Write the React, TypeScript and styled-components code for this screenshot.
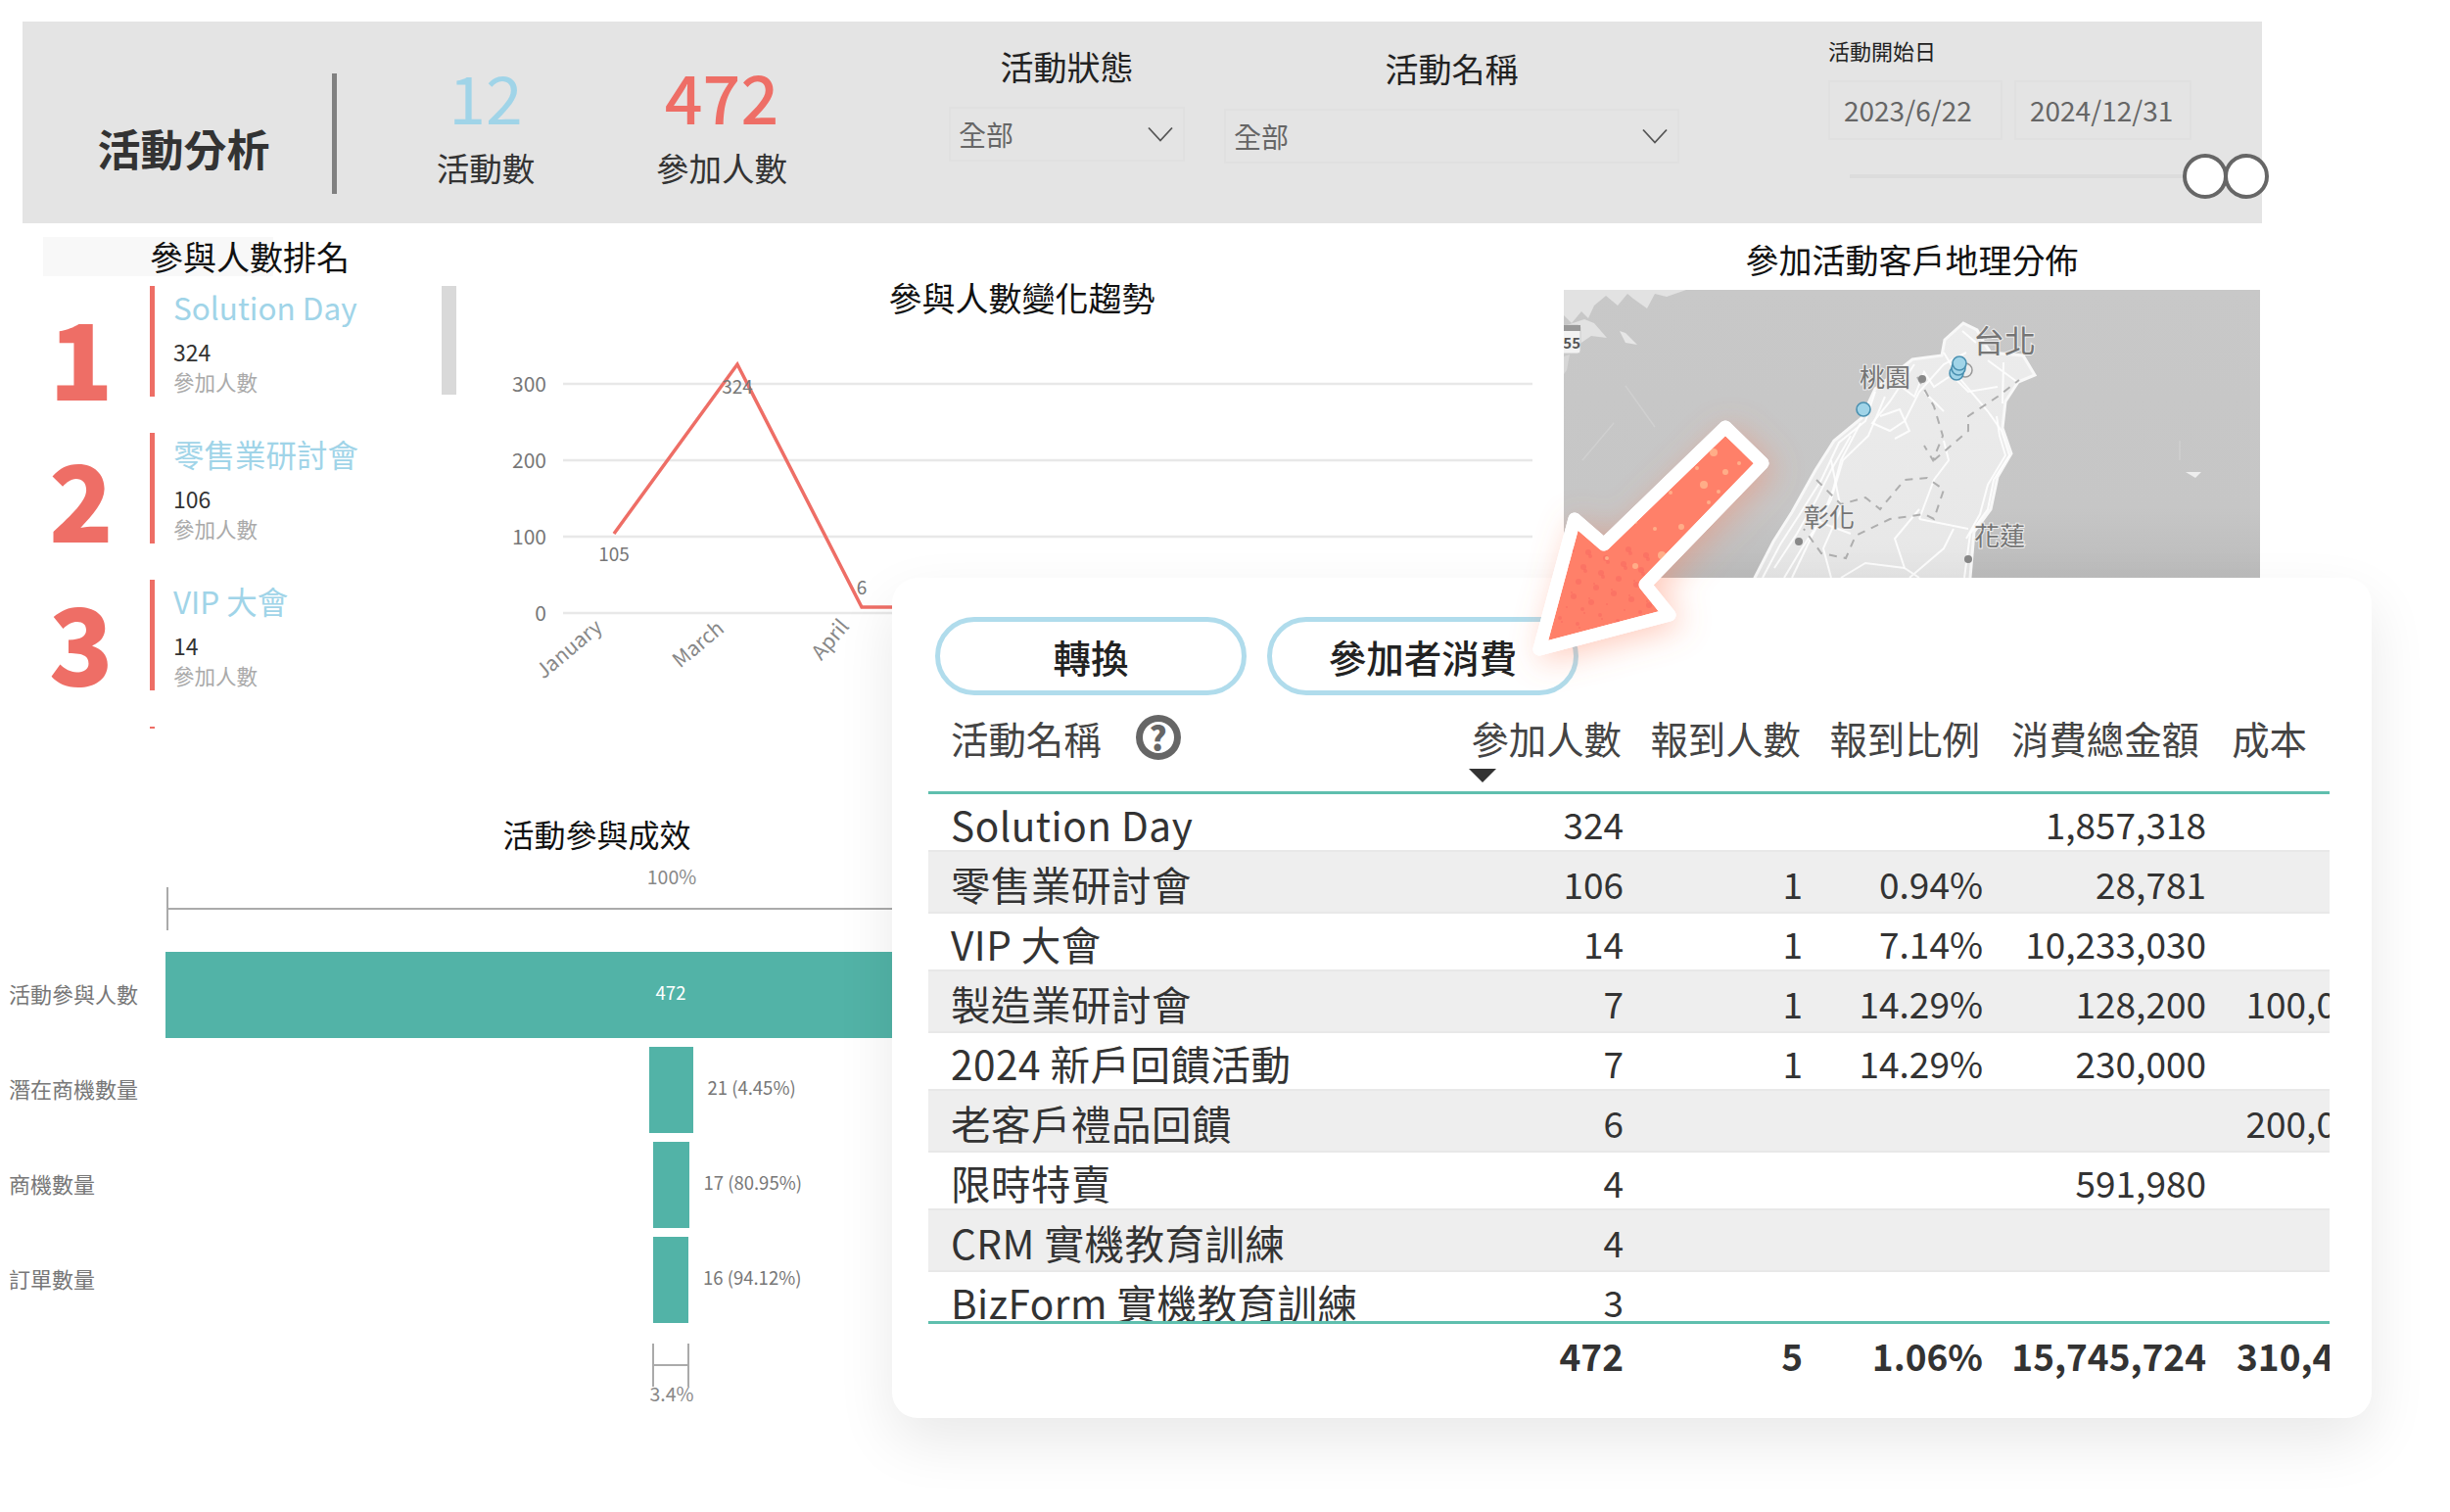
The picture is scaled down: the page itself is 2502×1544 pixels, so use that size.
import React from "react";
import styled, { createGlobalStyle } from "styled-components";

const GlobalStyle = createGlobalStyle`
  html, body {
    margin: 0;
    background: #fff;
    font-family: "Noto Sans CJK TC", "Noto Sans", sans-serif;
  }
`;

const Page = styled.div`
  position: relative;
  width: 2502px;
  height: 1544px;
  padding-top: 22px;
  box-sizing: border-box;
  overflow: hidden;
  background: #fff;
  color: #333;
`;

/* header band */
const Band = styled.header`
  display: flex;
  width: 2287px;
  height: 206px;
  margin-left: 23px;
  background: #e4e4e4;
`;

const BandTitle = styled.h1`
  width: 316px;
  margin: 0;
  padding: 100px 0 0 13px;
  box-sizing: border-box;
  font-size: 44px;
  line-height: 58px;
  font-weight: 700;
  text-align: center;
  color: #333;
`;

const BandDivider = styled.div`
  width: 5px;
  height: 123px;
  margin-top: 53px;
  background: #808080;
`;

const Kpi = styled.div<{ $left: number }>`
  width: 150px;
  margin-left: ${(p) => p.$left}px;
  padding-top: 39px;
  text-align: center;
  white-space: nowrap;
`;

const KpiValue = styled.div<{ $color: string }>`
  font-size: 68px;
  line-height: 74px;
  font-weight: ${(p) => (p.$color === "#ee6e66" ? 500 : 400)};
  color: ${(p) => p.$color};
`;

const KpiLabel = styled.div`
  margin-top: 14px;
  font-size: 33.5px;
  line-height: 44px;
  color: #333;
`;

const Filter = styled.div<{ $left: number; $width: number; $top: number }>`
  width: ${(p) => p.$width}px;
  margin-left: ${(p) => p.$left}px;
  padding-top: ${(p) => p.$top}px;
`;

const FilterTitle = styled.div`
  font-size: 34px;
  line-height: 44px;
  text-align: center;
  color: #222;
`;

const Select = styled.div`
  display: flex;
  align-items: center;
  justify-content: space-between;
  height: 56px;
  margin-top: 19px;
  padding: 0 10px 0 8px;
  box-sizing: border-box;
  border: 2px solid #e0e0e0;
  font-size: 28px;
  color: #666;
`;

const DateBlock = styled.div`
  position: relative;
  width: 371px;
  margin-left: 152px;
  padding-top: 16px;
`;

const DateLabel = styled.div`
  font-size: 22px;
  line-height: 26px;
  color: #222;
`;

const DateRow = styled.div`
  display: flex;
  gap: 12px;
  margin-top: 18px;
`;

const DateBox = styled.div<{ $width: number }>`
  width: ${(p) => p.$width}px;
  height: 61px;
  padding-left: 14px;
  box-sizing: border-box;
  border: 2px solid #e0e0e0;
  font-size: 28px;
  line-height: 57px;
  color: #666;
`;

const SliderTrack = styled.div`
  width: 341px;
  height: 4px;
  margin: 35px 0 0 22px;
  background: #dcdcdc;
`;

const SliderThumb = styled.div<{ $left: number }>`
  position: absolute;
  top: 135px;
  left: ${(p) => p.$left}px;
  width: 46px;
  height: 46px;
  box-sizing: border-box;
  border: 4px solid #666;
  border-radius: 50%;
  background: #fff;
`;

/* upper row: ranking, trend, map */
const TopRow = styled.section`
  display: flex;
  height: 603px;
`;

const Ranking = styled.div`
  position: relative;
  width: 430px;
  margin-left: 44px;
  flex: none;
`;

const RankingTitle = styled.h2`
  width: 235px;
  height: 40px;
  margin: 14px 0 0;
  padding-left: 109px;
  box-sizing: border-box;
  background: #f8f8f8;
  font-size: 34px;
  line-height: 40px;
  font-weight: 400;
  color: #111;
  white-space: nowrap;
`;

const RankList = styled.div`
  margin-top: 10px;
`;

const RankItem = styled.div`
  display: flex;
  height: 150px;
`;

const RankNumber = styled.div<{ $shift: number }>`
  width: 78px;
  margin-right: 31px;
  padding-top: ${(p) => p.$shift}px;
  font-size: 108px;
  line-height: 116px;
  font-weight: 900;
  text-align: center;
  color: #ee6e66;
`;

const RankBody = styled.div`
  height: 113px;
  padding-left: 19px;
  border-left: 5px solid #ee6e66;
`;

const RankStub = styled.div`
  width: 5px;
  height: 2px;
  margin-left: 109px;
  background: #ee6e66;
`;

const RankName = styled.div`
  margin-top: 1px;
  font-size: 31.5px;
  line-height: 40px;
  color: #a0d4e8;
`;

const RankValue = styled.div`
  margin-top: 11px;
  font-size: 23px;
  line-height: 30px;
  color: #333;
`;

const RankCaption = styled.div`
  margin-top: 1px;
  font-size: 21.5px;
  line-height: 30px;
  color: #aaa;
`;

const RankScroll = styled.div`
  position: absolute;
  top: 64px;
  left: 407px;
  width: 15px;
  height: 111px;
  background: #d9d9d9;
`;

const Trend = styled.div`
  width: 1077px;
  margin-left: 46px;
  flex: none;
`;

const ChartTitle = styled.h2<{ $top: number; $shift?: number }>`
  margin: 0;
  padding: ${(p) => p.$top}px ${(p) => p.$shift ?? 0}px 0 0;
  font-size: 34px;
  line-height: 44px;
  font-weight: 400;
  text-align: center;
  color: #111;
`;

const TrendSvg = styled.svg`
  display: block;
  width: 1077px;
  height: 390px;
`;

const MapPanel = styled.div`
  width: 711px;
  flex: none;
`;

const MapSvg = styled.svg`
  display: block;
  width: 711px;
  height: 404px;
  margin-top: 9px;
`;

/* funnel */
const Funnel = styled.section`
  width: 1202px;
`;

const FunnelTitle = styled.h2`
  margin: -2px 0 0;
  padding-left: 17px;
  font-size: 32px;
  line-height: 44px;
  font-weight: 400;
  text-align: center;
  color: #111;
`;

const FunnelCaption = styled.div`
  margin: 10px 0 0 170px;
  font-size: 19.5px;
  line-height: 24px;
  text-align: center;
  color: #888;
`;

const TopBracket = styled.div`
  width: 1032px;
  height: 44px;
  margin: -1px 0 22px 170px;
  box-sizing: border-box;
  border-left: 2px solid #aaa;
  background: linear-gradient(#aaa, #aaa) center / 100% 2px no-repeat;
`;

const FunnelRows = styled.div`
  display: flex;
  flex-direction: column;
  gap: 9px;
`;

const FunnelRow = styled.div`
  display: grid;
  grid-template-columns: 170px 1032px;
  height: 88px;
  align-items: center;
`;

const FunnelLabel = styled.div`
  padding: 0 0 4px 9px;
  font-size: 22px;
  color: #777;
  white-space: nowrap;
`;

const FunnelTrack = styled.div`
  display: grid;
  grid-template-columns: 1fr auto 1fr;
  height: 100%;
  align-items: center;
`;

const FunnelBar = styled.div<{ $width: number }>`
  display: flex;
  align-items: center;
  justify-content: center;
  width: ${(p) => p.$width}px;
  height: 88px;
  padding-bottom: 6px;
  box-sizing: border-box;
  transform: translateX(-1px);
  background: #52b3a7;
  font-size: 18.5px;
  color: #fff;
`;

const FunnelValue = styled.div`
  padding: 0 0 6px 14px;
  font-size: 18.5px;
  color: #777;
  white-space: nowrap;
`;

const BottomBracket = styled.div`
  width: 38px;
  height: 44px;
  margin: 21px 0 0 666px;
  box-sizing: border-box;
  border-left: 2px solid #aaa;
  border-right: 2px solid #aaa;
  background: linear-gradient(#aaa, #aaa) center / 100% 2px no-repeat;
`;

const BottomCaption = styled.div`
  width: 60px;
  margin: -5px 0 0 656px;
  font-size: 19.5px;
  line-height: 24px;
  text-align: center;
  color: #888;
`;

/* floating table card */
const Card = styled.div`
  position: absolute;
  top: 590px;
  left: 911px;
  width: 1511px;
  height: 858px;
  padding: 40px 0 0 37px;
  box-sizing: border-box;
  border-radius: 26px;
  background: #fff;
  box-shadow: 0 24px 60px rgba(0, 0, 0, 0.09);
`;

const ButtonRow = styled.div`
  display: flex;
  gap: 21px;
  margin-left: 7px;
`;

const PillButton = styled.button`
  width: 318px;
  height: 80px;
  box-sizing: border-box;
  border: 5px solid #b0dcec;
  border-radius: 40px;
  background: #fff;
  font-family: inherit;
  font-size: 38.5px;
  font-weight: 500;
  color: #222;
`;

const TableClip = styled.div`
  width: 1431px;
  overflow: hidden;
`;

const columns = "554px 156px 183px 184px 228px 174px";

const HeadRow = styled.div`
  display: grid;
  grid-template-columns: ${columns};
  width: 1479px;
  height: 101px;
  padding-top: 15px;
  box-sizing: border-box;
  border-bottom: 3px solid #5fbfae;
  font-size: 38.4px;
  line-height: 56px;
  color: #444;
`;

const HeadName = styled.div`
  display: flex;
  align-items: center;
  align-self: start;
  gap: 35px;
  padding-left: 23px;
`;

const HeadCell = styled.div<{ $pad: number; $sorted?: boolean }>`
  position: relative;
  padding-right: ${(p) => p.$pad}px;
  text-align: right;
  white-space: nowrap;

  ${(p) =>
    p.$sorted
      ? `&::after {
          content: "";
          position: absolute;
          left: -2px;
          top: 60px;
          border-left: 14px solid transparent;
          border-right: 14px solid transparent;
          border-top: 14px solid #333;
        }`
      : ""}
`;

const HelpIcon = styled.span`
  display: flex;
  align-items: center;
  justify-content: center;
  width: 46px;
  height: 46px;
  box-sizing: border-box;
  border: 7px solid #666;
  border-radius: 50%;
  font-size: 34px;
  font-weight: 900;
  line-height: 1;
  color: #666;
`;

const TableBody = styled.div`
  width: 1479px;
  height: 538px;
  overflow: hidden;
`;

const BodyRow = styled.div`
  display: grid;
  grid-template-columns: ${columns};
  height: 59px;
  padding-top: 3px;
  box-sizing: border-box;
  border-bottom: 2px solid #e8e8e8;
  font-size: 37px;
  line-height: 55px;
  color: #333;

  &:nth-child(even) {
    height: 63px;
    padding-top: 5px;
    background: #eee;
  }
`;

const NameCell = styled.div`
  padding-left: 23px;
  font-size: 40.5px;
  letter-spacing: 0.5px;
  white-space: nowrap;
`;

const NumCell = styled.div`
  text-align: right;
  white-space: nowrap;
`;

const FootRow = styled.div`
  display: grid;
  grid-template-columns: ${columns};
  width: 1479px;
  height: 64px;
  padding-top: 3px;
  box-sizing: border-box;
  border-top: 3px solid #5fbfae;
  font-size: 37px;
  line-height: 58px;
  font-weight: 700;
  color: #333;
`;

const ArrowSvg = styled.svg`
  position: absolute;
  top: 400px;
  left: 1530px;
  width: 320px;
  height: 310px;
  overflow: visible;
`;

const ranks = [
  { name: "Solution Day", value: 324, shift: 12 },
  { name: "零售業研討會", value: 106, shift: 7 },
  { name: "VIP 大會", value: 14, shift: 3 },
];

const funnelRows = [
  { label: "潛在商機數量", width: 45, value: "21 (4.45%)" },
  { label: "商機數量", width: 37, value: "17 (80.95%)" },
  { label: "訂單數量", width: 36, value: "16 (94.12%)" },
];

const tableRows = [
  ["Solution Day", "324", "", "", "1,857,318", ""],
  ["零售業研討會", "106", "1", "0.94%", "28,781", ""],
  ["VIP 大會", "14", "1", "7.14%", "10,233,030", ""],
  ["製造業研討會", "7", "1", "14.29%", "128,200", "100,000"],
  ["2024 新戶回饋活動", "7", "1", "14.29%", "230,000", ""],
  ["老客戶禮品回饋", "6", "", "", "", "200,000"],
  ["限時特賣", "4", "", "", "591,980", ""],
  ["CRM 實機教育訓練", "4", "", "", "", ""],
  ["BizForm 實機教育訓練", "3", "", "", "", ""],
];

const arrowPoints = "1762,436 1800,473 1680,597 1705,628 1572,663 1608,530 1638,556";

const Chevron = () => (
  <svg width="26" height="16" viewBox="0 0 26 16" fill="none" stroke="#555" strokeWidth="1.8">
    <path d="M1 1.5 L13 14.5 L25 1.5" />
  </svg>
);

const TrendChart = () => {
  const axis = { fontSize: 21, fill: "#777", fontFamily: "inherit" };
  return (
    <TrendSvg viewBox="520 326 1077 390" fill="none">
      {[
        [392, "300"],
        [470, "200"],
        [548, "100"],
        [626, "0"],
      ].map(([y, t]) => (
        <g key={t}>
          <line x1="575" x2="1565" y1={y} y2={y} stroke="#e8e8e8" strokeWidth="2.5" />
          <text x="558" y={Number(y) + 8} textAnchor="end" {...axis}>
            {t}
          </text>
        </g>
      ))}
      <polyline points="627,545 753,372 880,620 920,620 1100,622 1390,612" stroke="#ee6e66" strokeWidth="3.5" />
      <text x="627" y="573" textAnchor="middle" {...axis} fontSize="19">105</text>
      <text x="753" y="402" textAnchor="middle" {...axis} fontSize="19">324</text>
      <text x="880" y="607" textAnchor="middle" {...axis} fontSize="19">6</text>
      <text x="1386" y="604" textAnchor="middle" {...axis} fontSize="19">4</text>
      <text transform="translate(582 664) rotate(-40)" textAnchor="middle" dominantBaseline="middle" {...axis} fill="#888">January</text>
      <text transform="translate(714 659) rotate(-40)" textAnchor="middle" dominantBaseline="middle" {...axis} fill="#888">March</text>
      <text transform="translate(849 654) rotate(-50)" textAnchor="middle" dominantBaseline="middle" {...axis} fill="#888">April</text>
    </TrendSvg>
  );
};

const TaiwanMap = () => {
  const road = { stroke: "#fff", strokeWidth: 2, fill: "none", opacity: 0.85 };
  const rail = { stroke: "#aeaeae", strokeWidth: 2, fill: "none", strokeDasharray: "8 7" };
  const place = {
    fontSize: 26,
    fill: "#757575",
    fontFamily: "inherit",
    textAnchor: "middle" as const,
    stroke: "#eee",
    strokeWidth: 2,
    paintOrder: "stroke" as const,
  };
  return (
    <MapSvg viewBox="1597 296 711 404">
      <defs>
        <linearGradient id="sea" x1="0" x2="0" y1="0" y2="1">
          <stop offset="0" stopColor="#c8c8c8" />
          <stop offset="0.55" stopColor="#c6c6c6" />
          <stop offset="0.72" stopColor="#bcbcbc" />
          <stop offset="1" stopColor="#b8b8b8" />
        </linearGradient>
        <linearGradient id="land" x1="0" x2="0" y1="0" y2="1">
          <stop offset="0" stopColor="#ececec" />
          <stop offset="0.6" stopColor="#e8e8e8" />
          <stop offset="1" stopColor="#d8d8d8" />
        </linearGradient>
      </defs>
      <rect x="1597" y="296" width="711" height="404" fill="url(#sea)" />
      <path
        d="M1597 296 H1722 L1702 303 L1690 300 L1682 315 L1668 305 L1662 300 L1652 312 L1640 302 L1628 312 L1622 325 L1615 318 L1605 330 L1597 322 Z"
        fill="#e2e2e2"
      />
      <path d="M1600 332 L1618 326 L1628 330 L1641 345 L1625 343 L1612 352 L1600 345 Z" fill="#e2e2e2" />
      <path d="M1654 338 L1660 340 L1672 352 L1660 350 Z" fill="#e6e6e6" />
      <path d="M1597 364 L1603 362 L1600 378 L1597 382 Z" fill="#d6d6d6" />
      <path d="M2232 482 L2248 482 L2242 488 Z" fill="#eee" />
      <path d="M2226 450 L2226 470" stroke="#cfcfcf" strokeWidth="1.5" />
      <path d="M1616 470 L1648 432 M1660 394 L1690 436" stroke="#d0d0d0" strokeWidth="1.5" />
      <path
        d="M2005 330 L2019 337 L2026 350 L2033 360 L2066 363 L2078 383 L2061 390 L2048 410 L2045 437 L2054 463 L2040 487 L2033 520 L2016 543 L2012 590 L2000 650 L1960 700 L1780 700 L1792 590 L1811 553 L1830 523 L1854 480 L1873 450 L1901 427 L1915 397 L1953 367 L1983 363 L1986 347 Z"
        fill="url(#land)"
        stroke="#f8f8f8"
        strokeWidth="3"
      />
      <path d="M1915 400 L1905 430 L1878 452 L1860 490 L1838 525 L1818 556 L1800 590" {...road} />
      <path d="M1925 405 L1908 445 L1882 470 L1870 510 L1850 548 L1830 590" {...road} />
      <path d="M1900 432 L1880 470 L1872 500 L1860 530 L1840 560 L1822 590" {...road} />
      <path d="M1890 445 L1870 480 L1855 510 L1835 545 L1812 580" {...road} />
      <path d="M1955 372 L1930 410 L1912 432 L1930 440 L1945 430 L1960 400 L1985 372 L2008 360" {...road} />
      <path d="M1938 392 L1955 405 L1965 380 L1975 395 L1990 385" {...road} />
      <path d="M1920 425 L1940 418 L1950 440 L1935 448 M1965 400 L1985 420" {...road} />
      <path d="M1985 360 L2000 385 L2030 420 L2044 440 L2052 465 L2036 490 L2030 520 L2012 545 L2006 590" {...road} />
      <path d="M2039 425 L2042 445 L2048 465 L2030 495 L2022 525 L2008 550" {...road} />
      <path d="M2045 412 L2046 370 M2060 390 L2030 368 M2018 350 L2004 338 M1990 380 L2010 400 L2040 395" {...road} />
      <path d="M1870 470 L1880 520 L1862 560 L1870 590 M1960 520 L1935 550 L1945 580 L1960 590 M1960 530 L2010 540 M1995 540 L1985 560 L1950 590" {...road} />
      <path d="M1985 450 L1990 470 L1975 490 L1960 530 M1850 530 L1890 545 M1880 590 L1905 575 L1945 580" {...road} />
      <path d="M1958 385 L1975 415 L1984 445 L1974 470 L1965 455 M1975 470 L2010 440 L2010 425 L2040 405 L2062 388" {...rail} />
      <path d="M1855 490 L1880 515 L1905 508 L1920 520 L1945 490 L1968 488 L1985 500 L1975 530 L1965 525 L1930 530 L1895 547 L1885 570 L1860 565 L1842 540" {...rail} />
      <text x="2047" y="360" {...place} fontSize="32">台北</text>
      <text x="1925" y="395" {...place}>桃園</text>
      <text x="1868" y="538" {...place}>彰化</text>
      <text x="2042" y="557" {...place}>花蓮</text>
      <circle cx="1963" cy="387" r="4" fill="#888" />
      <circle cx="1837" cy="553" r="4" fill="#888" />
      <circle cx="2010" cy="571" r="4" fill="#888" />
      <circle cx="2007" cy="378" r="7" fill="#eee" stroke="#999" strokeWidth="1.5" />
      {[
        [1998, 381],
        [2000, 376],
        [2001, 371],
        [1903, 418],
      ].map(([cx, cy]) => (
        <circle key={`${cx}-${cy}`} cx={cx} cy={cy} r="7" fill="#a0d4e8" stroke="#4a90b0" strokeWidth="1.6" />
      ))}
      <rect x="1590" y="332" width="24" height="29" rx="3" fill="#f2f2f2" stroke="#ccc" />
      <rect x="1590" y="332" width="24" height="6" fill="#999" />
      <text x="1614" y="356" fontSize="15" fontWeight="700" fill="#555" textAnchor="end" fontFamily="inherit">55</text>
    </MapSvg>
  );
};

const ArrowMark = () => {
  const light = [
    [1750, 462, 4],
    [1762, 482, 3],
    [1740, 495, 4],
    [1776, 473, 2],
    [1755, 502, 2],
    [1717, 538, 3],
    [1697, 567, 4],
    [1670, 533, 2],
    [1706, 503, 2],
    [1745, 513, 2],
    [1670, 578, 3],
    [1641, 570, 2],
    [1733, 478, 2],
    [1690, 540, 2],
  ];
  const dark = Array.from({ length: 60 }, (_, i) => [
    1590 + ((i * 47) % 100),
    560 + ((i * 29) % 90),
    1 + (i % 3),
  ]);
  return (
    <ArrowSvg viewBox="1530 400 320 310">
      <defs>
        <filter id="glow" x="-30%" y="-30%" width="160%" height="160%">
          <feDropShadow dx="6" dy="6" stdDeviation="16" floodColor="#ff7d5a" floodOpacity="0.4" />
        </filter>
        <clipPath id="arrowClip">
          <polygon points={arrowPoints} />
        </clipPath>
      </defs>
      <polygon
        points={arrowPoints}
        fill="#ff8069"
        stroke="#fff"
        strokeWidth="13"
        strokeLinejoin="round"
        filter="url(#glow)"
      />
      <g clipPath="url(#arrowClip)">
        {dark.map(([cx, cy, r]) => (
          <circle key={`${cx}-${cy}`} cx={cx} cy={cy} r={r} fill="#f4605c" opacity="0.4" />
        ))}
        {light.map(([cx, cy, r]) => (
          <circle key={`${cx}-${cy}`} cx={cx} cy={cy} r={r} fill="#ffb58e" opacity="0.85" />
        ))}
      </g>
      <polygon points={arrowPoints} fill="none" stroke="#fff" strokeWidth="13" strokeLinejoin="round" />
    </ArrowSvg>
  );
};

const App = () => (
  <>
    <GlobalStyle />
    <Page>
      <Band>
        <BandTitle>活動分析</BandTitle>
        <BandDivider />
        <Kpi $left={77}>
          <KpiValue $color="#a0d4e8">12</KpiValue>
          <KpiLabel>活動數</KpiLabel>
        </Kpi>
        <Kpi $left={91}>
          <KpiValue $color="#ee6e66">472</KpiValue>
          <KpiLabel>參加人數</KpiLabel>
        </Kpi>
        <Filter $left={157} $width={241} $top={24}>
          <FilterTitle>活動狀態</FilterTitle>
          <Select>
            全部
            <Chevron />
          </Select>
        </Filter>
        <Filter $left={40} $width={465} $top={26}>
          <FilterTitle>活動名稱</FilterTitle>
          <Select>
            全部
            <Chevron />
          </Select>
        </Filter>
        <DateBlock>
          <DateLabel>活動開始日</DateLabel>
          <DateRow>
            <DateBox $width={178}>2023/6/22</DateBox>
            <DateBox $width={181}>2024/12/31</DateBox>
          </DateRow>
          <SliderTrack />
          <SliderThumb $left={362} />
          <SliderThumb $left={404} />
        </DateBlock>
      </Band>

      <TopRow>
        <Ranking>
          <RankingTitle>參與人數排名</RankingTitle>
          <RankList>
            {ranks.map((r, i) => (
              <RankItem key={r.name}>
                <RankNumber $shift={r.shift}>{i + 1}</RankNumber>
                <RankBody>
                  <RankName>{r.name}</RankName>
                  <RankValue>{r.value}</RankValue>
                  <RankCaption>參加人數</RankCaption>
                </RankBody>
              </RankItem>
            ))}
            <RankStub />
          </RankList>
          <RankScroll />
        </Ranking>

        <Trend>
          <ChartTitle $top={54} $shift={30}>
            參與人數變化趨勢
          </ChartTitle>
          <TrendChart />
        </Trend>

        <MapPanel>
          <ChartTitle $top={15}>參加活動客戶地理分佈</ChartTitle>
          <TaiwanMap />
        </MapPanel>
      </TopRow>

      <Funnel>
        <FunnelTitle>活動參與成效</FunnelTitle>
        <FunnelCaption>100%</FunnelCaption>
        <TopBracket />
        <FunnelRows>
          <FunnelRow>
            <FunnelLabel>活動參與人數</FunnelLabel>
            <FunnelTrack>
              <span />
              <FunnelBar $width={1032}>472</FunnelBar>
              <span />
            </FunnelTrack>
          </FunnelRow>
          {funnelRows.map((r) => (
            <FunnelRow key={r.label}>
              <FunnelLabel>{r.label}</FunnelLabel>
              <FunnelTrack>
                <span />
                <FunnelBar $width={r.width} />
                <FunnelValue>{r.value}</FunnelValue>
              </FunnelTrack>
            </FunnelRow>
          ))}
        </FunnelRows>
        <BottomBracket />
        <BottomCaption>3.4%</BottomCaption>
      </Funnel>

      <Card>
        <ButtonRow>
          <PillButton>轉換</PillButton>
          <PillButton>參加者消費</PillButton>
        </ButtonRow>
        <TableClip>
          <HeadRow>
            <HeadName>
              活動名稱
              <HelpIcon>?</HelpIcon>
            </HeadName>
            <HeadCell $pad={2} $sorted>
              參加人數
            </HeadCell>
            <HeadCell $pad={2}>報到人數</HeadCell>
            <HeadCell $pad={3}>報到比例</HeadCell>
            <HeadCell $pad={7}>消費總金額</HeadCell>
            <HeadCell $pad={71}>成本</HeadCell>
          </HeadRow>
          <TableBody>
            {tableRows.map((row) => (
              <BodyRow key={row[0]}>
                <NameCell>{row[0]}</NameCell>
                {row.slice(1).map((v, i) => (
                  <NumCell key={i}>{v}</NumCell>
                ))}
              </BodyRow>
            ))}
          </TableBody>
          <FootRow>
            <span />
            <NumCell>472</NumCell>
            <NumCell>5</NumCell>
            <NumCell>1.06%</NumCell>
            <NumCell>15,745,724</NumCell>
            <NumCell>310,400</NumCell>
          </FootRow>
        </TableClip>
      </Card>
      <ArrowMark />
    </Page>
  </>
);

export default App;
